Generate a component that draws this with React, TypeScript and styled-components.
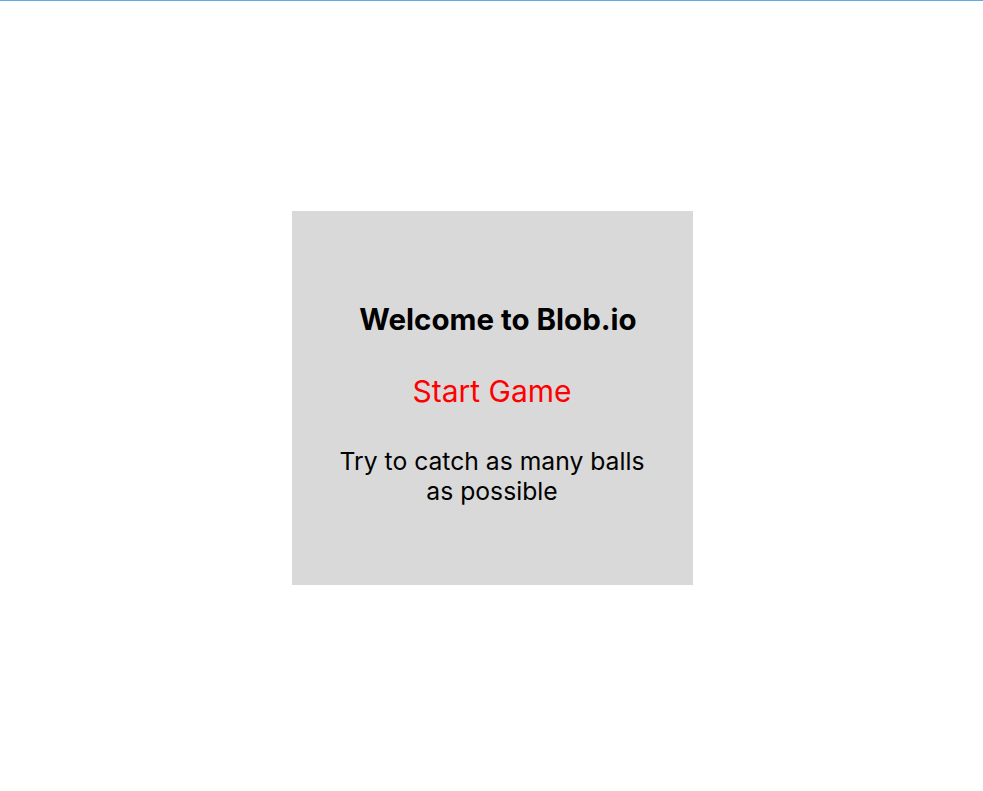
import React from "react";
import styled, { createGlobalStyle } from "styled-components";

const Global = createGlobalStyle`
  html, body { margin: 0; padding: 0; background: #ffffff; }
  body { font-family: Inter, "Noto Sans", sans-serif; }
`;

const Page = styled.div`
  min-height: 791px;
  border-top: 1px solid #5dade2;
  box-sizing: border-box;
  display: flex;
  justify-content: center;
  padding-top: 210px;
`;

const Card = styled.div`
  width: 401px;
  height: 374px;
  margin-left: 1px;
  background: #d9d9d9;
  display: flex;
  flex-direction: column;
  align-items: center;
  box-sizing: border-box;
  padding-top: 88px;
`;

const Title = styled.h1`
  margin: 0 0 0 12px;
  font-size: 29.5px;
  font-weight: 700;
  color: #000;
  line-height: 40px;
`;

const StartButton = styled.button`
  margin-top: 32px;
  background: none;
  border: none;
  padding: 0;
  font-family: inherit;
  font-size: 30px;
  color: #ff0000;
  line-height: 40px;
  cursor: pointer;
`;

const Hint = styled.p`
  margin: 36px 0 0;
  font-size: 24.7px;
  color: #000;
  text-align: center;
  line-height: 29.5px;
  width: 330px;
`;

export default function App() {
  return (
    <>
      <Global />
      <Page>
        <Card>
          <Title>Welcome to Blob.io</Title>
          <StartButton>Start Game</StartButton>
          <Hint>Try to catch as many balls as possible</Hint>
        </Card>
      </Page>
    </>
  );
}
